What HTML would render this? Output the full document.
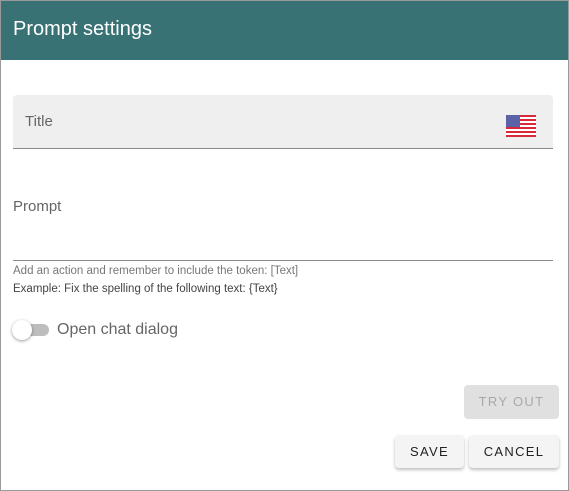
<!DOCTYPE html>
<html><head><style>
*{box-sizing:border-box;margin:0;padding:0}
body{width:569px;height:491px;background:#fff;font-family:"Liberation Sans",sans-serif;position:relative;overflow:hidden}
.frame{position:absolute;left:0;top:0;width:569px;height:491px;border:1px solid #9a9a9a}
.hdr{position:absolute;left:1px;top:1px;width:567px;height:59px;background:#387275;color:#fff;font-size:20px;padding:17px 0 0 12px}
.field{position:absolute;left:13px;top:95px;width:540px;height:54px;background:#efefef;border-radius:4px 4px 0 0;border-bottom:1px solid #8a8a8a}
.lbl{position:absolute;color:#666;font-size:15px}
.abs{position:absolute}
.btn{position:absolute;border-radius:4px;font-size:13px;letter-spacing:1.3px;text-align:center;line-height:34px;background:#f4f4f4;color:#222;box-shadow:0 2px 3px rgba(0,0,0,.25)}
</style></head><body>
<div class="frame"></div>
<div class="hdr">Prompt settings</div>
<div class="field"></div>
<div class="lbl" style="left:25px;top:113px">Title</div>
<svg class="abs" style="left:506px;top:115px" width="30" height="22" viewBox="0 0 30 22">
<rect width="30" height="22" fill="#fff"/>
<g fill="#d8283a"><rect y="0" width="30" height="2"/><rect y="4" width="30" height="2"/><rect y="8" width="30" height="2"/><rect y="12" width="30" height="2"/><rect y="16" width="30" height="2"/><rect y="20" width="30" height="2"/></g>
<rect width="14" height="12" fill="#5a63a8"/>
</svg>
<div class="lbl" style="left:13px;top:198px">Prompt</div>
<div class="abs" style="left:13px;top:260px;width:540px;height:1px;background:#8a8a8a"></div>
<div class="abs" style="left:13px;top:265px;font-size:11.5px;color:#777">Add an action and remember to include the token: [Text]</div>
<div class="abs" style="left:13px;top:283px;font-size:11.5px;color:#444">Example: Fix the spelling of the following text: {Text}</div>
<div class="abs" style="left:14px;top:324px;width:35px;height:12px;border-radius:6px;background:#bdbdbd"></div>
<div class="abs" style="left:12px;top:320px;width:20px;height:20px;border-radius:50%;background:#fff;box-shadow:0 1px 3px rgba(0,0,0,.4)"></div>
<div class="lbl" style="left:57px;top:321px;font-size:16px">Open chat dialog</div>
<div class="btn" style="left:464px;top:385px;width:95px;height:34px;background:#e0e0e0;color:#a8a8a8;box-shadow:none">TRY OUT</div>
<div class="btn" style="left:395px;top:435px;width:69px;height:33px">SAVE</div>
<div class="btn" style="left:469px;top:435px;width:90px;height:33px">CANCEL</div>
</body></html>
